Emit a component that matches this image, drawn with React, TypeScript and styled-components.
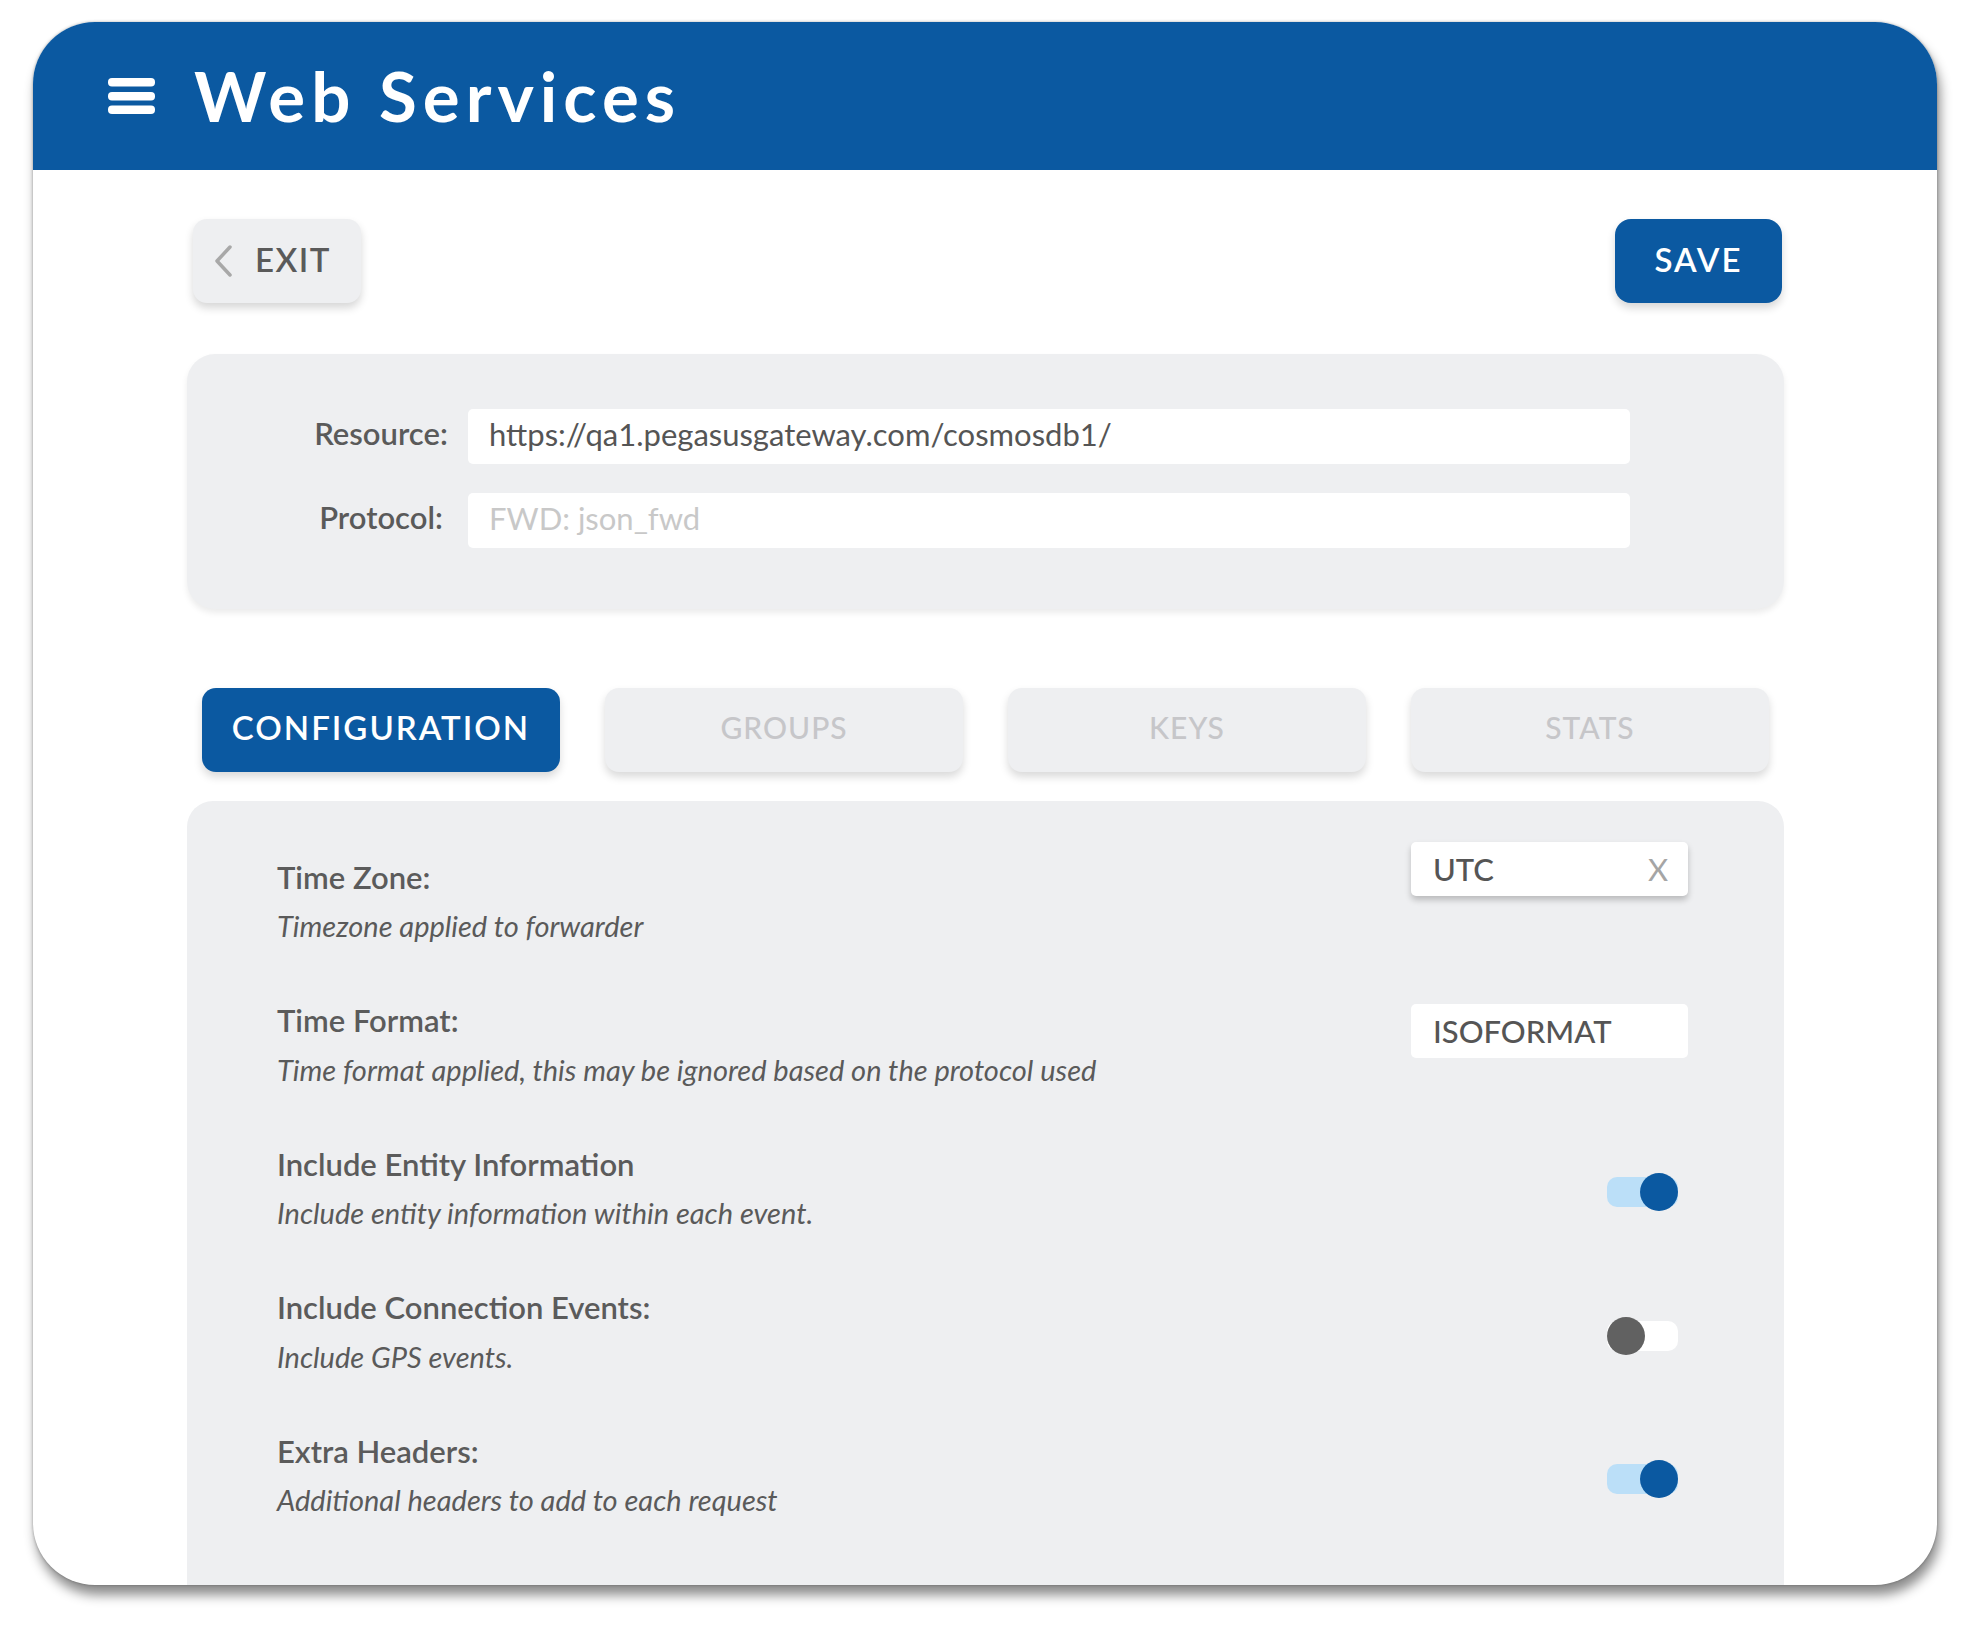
import React from "react";
import styled, { createGlobalStyle } from "styled-components";

const GlobalStyle = createGlobalStyle`
  html, body {
    margin: 0;
    padding: 0;
    background: #fff;
  }
  body {
    font-family: Lato, "Open Sans", "Liberation Sans", sans-serif;
    color: #5a5a5a;
  }
`;

const Page = styled.div`
  width: 1969px;
  height: 1628px;
  padding: 22px 0 0 33px;
  box-sizing: border-box;
  overflow: hidden;
`;

const Card = styled.div`
  width: 1904px;
  height: 1563px;
  border-radius: 62px;
  background: #fff;
  overflow: hidden;
  display: flex;
  flex-direction: column;
  box-shadow: 3px 10px 12px rgba(0, 0, 0, 0.45), 0 0 3px rgba(0, 0, 0, 0.3);
`;

const Header = styled.header`
  height: 148px;
  flex-shrink: 0;
  background: #0b59a1;
  display: flex;
  align-items: center;
  gap: 39px;
  padding-left: 75px;
`;

const Title = styled.h1`
  margin: 0;
  color: #fff;
  font-size: 69px;
  font-weight: 700;
  letter-spacing: 6px;
  line-height: 1.2;
`;

const Body = styled.main`
  flex: 1;
  min-height: 0;
  display: flex;
  flex-direction: column;
  padding: 49px 153px 0 154px;
`;

const ActionBar = styled.div`
  display: flex;
  justify-content: space-between;
  align-items: center;
  padding: 0 2px 0 6px;
`;

const ExitButton = styled.button`
  width: 168px;
  height: 84px;
  border: none;
  border-radius: 14px;
  background: #eeeff1;
  box-shadow: 0 5px 8px rgba(0, 0, 0, 0.16);
  display: flex;
  align-items: center;
  gap: 23px;
  padding: 0 0 5px 21px;
  font-family: inherit;
  font-size: 33px;
  font-weight: 600;
  letter-spacing: 1.5px;
  color: #5a5a5a;
  svg {
    margin-top: 5px;
  }
`;

const SaveButton = styled.button`
  width: 167px;
  height: 84px;
  border: none;
  border-radius: 16px;
  background: #0b59a1;
  box-shadow: 0 5px 8px rgba(0, 0, 0, 0.16);
  padding: 0 0 5px;
  font-family: inherit;
  font-size: 33px;
  font-weight: 600;
  letter-spacing: 2px;
  color: #fff;
`;

const ResourcePanel = styled.section`
  margin-top: 51px;
  height: 255px;
  box-sizing: border-box;
  border-radius: 28px;
  background: #eeeff1;
  box-shadow: 0 4px 6px rgba(0, 0, 0, 0.08);
  padding: 55px 154px 0 119px;
  display: flex;
  flex-direction: column;
  gap: 29px;
`;

const FieldRow = styled.div`
  display: grid;
  grid-template-columns: 150px 1fr;
  column-gap: 12px;
  align-items: center;
`;

const FieldLabel = styled.label`
  text-align: center;
  font-size: 31px;
  font-weight: 600;
  color: #5a5a5a;
  margin-top: -7px;
`;

const TextInput = styled.input`
  height: 55px;
  box-sizing: border-box;
  border: none;
  outline: none;
  border-radius: 5px;
  background: #fff;
  padding: 0 21px 5px;
  font-family: inherit;
  font-size: 31px;
  color: #555;
  &::placeholder {
    color: #c8c8c8;
  }
`;

const TabBar = styled.nav`
  margin-top: 79px;
  padding: 0 15px;
  display: grid;
  grid-template-columns: repeat(4, 1fr);
  gap: 45px;
`;

const Tab = styled.button<{ $active?: boolean }>`
  height: 84px;
  border: none;
  border-radius: 14px;
  padding: 0 0 6px;
  font-family: inherit;
  background: ${(p) => (p.$active ? "#0b59a1" : "#eeeff1")};
  color: ${(p) => (p.$active ? "#fff" : "#c6c6c9")};
  font-size: ${(p) => (p.$active ? "33px" : "30px")};
  font-weight: ${(p) => (p.$active ? 600 : 500)};
  letter-spacing: ${(p) => (p.$active ? "2px" : "1px")};
  box-shadow: 0 5px 8px rgba(0, 0, 0, 0.15);
`;

const ConfigPanel = styled.section`
  margin-top: 29px;
  flex: 1;
  background: #eeeff1;
  border-radius: 26px 26px 0 0;
  padding: 58px 96px 0 90px;
  display: flex;
  flex-direction: column;
  gap: 58.5px;
`;

const SettingRow = styled.div<{ $center?: boolean }>`
  display: flex;
  justify-content: space-between;
  align-items: ${(p) => (p.$center ? "center" : "flex-start")};
`;

const SettingText = styled.div`
  display: flex;
  flex-direction: column;
  gap: 13px;
`;

const SettingLabel = styled.div`
  font-size: 31px;
  font-weight: 600;
  line-height: 1.2;
  color: #5b5b5b;
`;

const SettingDesc = styled.div`
  font-size: 29px;
  font-style: italic;
  line-height: 1.2;
  color: #5a5a5a;
`;

const Control = styled.div`
  width: 277px;
  display: flex;
  justify-content: flex-end;
`;

const ValueBox = styled.div<{ $raised?: boolean; $offset: number }>`
  width: 277px;
  height: 54px;
  margin-top: ${(p) => p.$offset}px;
  box-sizing: border-box;
  border-radius: 5px;
  background: #fff;
  box-shadow: ${(p) => (p.$raised ? "0 4px 6px rgba(0, 0, 0, 0.22)" : "none")};
  display: flex;
  align-items: center;
  justify-content: space-between;
  padding: 0 20px 0 22px;
  font-size: 31px;
  font-weight: 500;
  color: #555;
`;

const Clear = styled.span`
  color: #a5a5a5;
  font-weight: 400;
`;

const Toggle = styled.div`
  position: relative;
  width: 71px;
  height: 38px;
  margin: 8px 10px 0 0;
`;

const Track = styled.div<{ $on?: boolean }>`
  position: absolute;
  top: 4px;
  left: 0;
  right: 0;
  height: 30px;
  border-radius: 10px;
  background: ${(p) => (p.$on ? "#bbdff8" : "#fff")};
`;

const Knob = styled.div<{ $on?: boolean }>`
  position: absolute;
  top: 0;
  ${(p) => (p.$on ? "right: 0;" : "left: 0;")}
  width: 38px;
  height: 38px;
  border-radius: 50%;
  background: ${(p) => (p.$on ? "#0b59a1" : "#616161")};
`;

const MenuIcon = () => (
  <svg width="47" height="36" viewBox="0 0 47 36">
    <rect x="0" y="0" width="47" height="8.5" rx="4" fill="#fff" />
    <rect x="0" y="14" width="47" height="8.5" rx="4" fill="#fff" />
    <rect x="0" y="27.5" width="47" height="8.5" rx="4" fill="#fff" />
  </svg>
);

const Chevron = () => (
  <svg width="18" height="32" viewBox="0 0 18 32">
    <polyline points="16,2 3,16 16,30" fill="none" stroke="#a8a8a8" strokeWidth="3.5" strokeLinecap="round" strokeLinejoin="round" />
  </svg>
);

const Switch = ({ on }: { on?: boolean }) => (
  <Toggle>
    <Track $on={on} />
    <Knob $on={on} />
  </Toggle>
);

const settings = [
  { label: "Include Entity Information", desc: "Include entity information within each event.", on: true },
  { label: "Include Connection Events:", desc: "Include GPS events.", on: false },
  { label: "Extra Headers:", desc: "Additional headers to add to each request", on: true },
];

const tabs = ["CONFIGURATION", "GROUPS", "KEYS", "STATS"];

const App: React.FC = () => {
  return (
    <Page>
      <GlobalStyle />
      <Card>
        <Header>
          <MenuIcon />
          <Title>Web Services</Title>
        </Header>
        <Body>
          <ActionBar>
            <ExitButton>
              <Chevron />
              EXIT
            </ExitButton>
            <SaveButton>SAVE</SaveButton>
          </ActionBar>

          <ResourcePanel>
            <FieldRow>
              <FieldLabel>Resource:</FieldLabel>
              <TextInput readOnly value="https://qa1.pegasusgateway.com/cosmosdb1/" />
            </FieldRow>
            <FieldRow>
              <FieldLabel>Protocol:</FieldLabel>
              <TextInput readOnly placeholder="FWD: json_fwd" />
            </FieldRow>
          </ResourcePanel>

          <TabBar>
            {tabs.map((t, i) => (
              <Tab key={t} $active={i === 0}>
                {t}
              </Tab>
            ))}
          </TabBar>

          <ConfigPanel>
            <SettingRow>
              <SettingText>
                <SettingLabel>Time Zone:</SettingLabel>
                <SettingDesc>Timezone applied to forwarder</SettingDesc>
              </SettingText>
              <Control>
                <ValueBox $raised $offset={-17}>
                  UTC
                  <Clear>X</Clear>
                </ValueBox>
              </Control>
            </SettingRow>
            <SettingRow>
              <SettingText>
                <SettingLabel>Time Format:</SettingLabel>
                <SettingDesc>Time format applied, this may be ignored based on the protocol used</SettingDesc>
              </SettingText>
              <Control>
                <ValueBox $offset={2}>ISOFORMAT</ValueBox>
              </Control>
            </SettingRow>
            {settings.map((s) => (
              <SettingRow key={s.label} $center>
                <SettingText>
                  <SettingLabel>{s.label}</SettingLabel>
                  <SettingDesc>{s.desc}</SettingDesc>
                </SettingText>
                <Control>
                  <Switch on={s.on} />
                </Control>
              </SettingRow>
            ))}
          </ConfigPanel>
        </Body>
      </Card>
    </Page>
  );
};

export default App;
